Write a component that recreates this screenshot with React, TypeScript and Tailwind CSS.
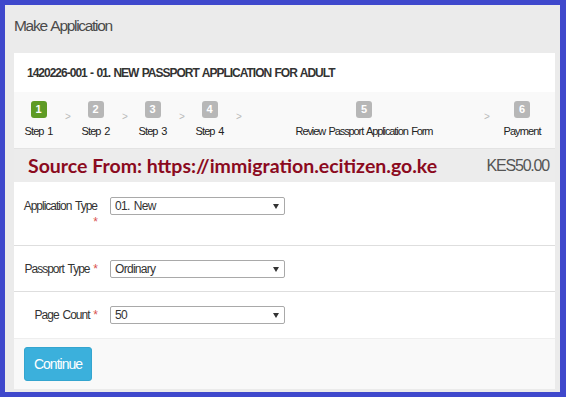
import React from "react";

const Chevron = ({ ml }: { ml: string }) => (
  <div className={`${ml} w-[8px] mt-[11px] flex justify-center`}>
    <span className="text-[10px] leading-[10px] text-[#b9b9b9]">&gt;</span>
  </div>
);

const Step = ({
  n,
  label,
  w,
  ml,
  track,
  active,
}: {
  n: number;
  label: string;
  w: string;
  ml: string;
  track: string;
  active?: boolean;
}) => (
  <div className={`${w} ${ml} flex flex-col items-center`}>
    <div
      className={`w-[16px] h-[17px] rounded-[3px] flex items-center justify-center text-white text-[11px] font-bold ${
        active ? "bg-[#5e9b25]" : "bg-[#b7b7b7]"
      }`}
    >
      {n}
    </div>
    <div
      className={`mt-[6px] text-[11px] ${track} [word-spacing:1.5px] leading-[14px] text-[#222] whitespace-nowrap`}
    >
      {label}
    </div>
  </div>
);

const Select = ({ value }: { value: string }) => (
  <div className="w-[175px] h-[18px] border border-[#a9a9a9] rounded-[2px] bg-white flex items-center justify-between pl-[4px] pr-[5px]">
    <span className="text-[12px] tracking-[-0.7px] [word-spacing:1.5px] leading-[14px] text-[#333]">{value}</span>
    <svg width="6" height="5" viewBox="0 0 6 5">
      <polygon points="0,0 6,0 3,5" fill="#333" />
    </svg>
  </div>
);

export default function App() {
  return (
    <div className="w-[566px] h-[397px] bg-[#3f48cc] pt-[5px] pl-[5px] pr-[6px] pb-[5px] font-['Liberation_Sans',Arial,sans-serif]">
      <div className="h-full bg-[#ebebeb] pl-[9px] pr-[5px] pb-[3px] flex flex-col">
        <div className="h-[48px] pb-[6px] flex items-center text-[15.5px] tracking-[-1.3px] [word-spacing:1.5px] text-[#4a4a4a]">
          Make Application
        </div>
        <div className="flex-1 bg-white flex flex-col">
          <div className="h-[39px] pl-[13px] flex items-center text-[12px] tracking-[-1px] [word-spacing:1px] font-bold text-[#333]">
            1420226-001 - 01. NEW PASSPORT APPLICATION FOR ADULT
          </div>
          <div className="h-[57px] bg-[#f9f9f9] border-b border-[#e3e3e3] pt-[9px] pl-[11px] flex items-start">
            <Step n={1} label="Step 1" w="w-[27px]" ml="ml-0" track="tracking-[-0.9px]" active />
            <Chevron ml="ml-[12px]" />
            <Step n={2} label="Step 2" w="w-[27px]" ml="ml-[10px]" track="tracking-[-0.9px]" />
            <Chevron ml="ml-[12px]" />
            <Step n={3} label="Step 3" w="w-[27px]" ml="ml-[10px]" track="tracking-[-0.9px]" />
            <Chevron ml="ml-[12px]" />
            <Step n={4} label="Step 4" w="w-[27px]" ml="ml-[10px]" track="tracking-[-0.9px]" />
            <Chevron ml="ml-[12px]" />
            <Step
              n={5}
              label="Review Passport Application Form"
              w="w-[136px]"
              ml="ml-[53px]"
              track="tracking-[-1.1px]"
            />
            <Chevron ml="ml-[51px]" />
            <Step n={6} label="Payment" w="w-[34px]" ml="ml-[14px]" track="tracking-[-0.9px]" />
          </div>
          <div className="h-[33px] bg-[#ececec] pl-[14px] pr-[6px] flex items-center justify-between">
            <span className="font-['Lato',sans-serif] font-bold text-[19.5px] text-[#8b0a1e] leading-none">
              Source From: https://immigration.ecitizen.go.ke
            </span>
            <span className="text-[16px] tracking-[-1.2px] text-[#555]">KES50.00</span>
          </div>
          <div className="h-[64px] border-b border-[#dedede] flex items-start pt-[15px]">
            <div className="w-[83px] text-right text-[12px] tracking-[-1px] [word-spacing:1.5px] leading-[16px] text-[#333] mt-[1px] whitespace-nowrap">
              Application Type
              <br />
              <span className="text-[#d9534f]">*</span>
            </div>
            <div className="ml-[13px]">
              <Select value="01. New" />
            </div>
          </div>
          <div className="h-[46px] border-b border-[#dedede] flex items-start pt-[14px]">
            <div className="w-[83px] text-right text-[12px] tracking-[-1px] [word-spacing:1.5px] leading-[16px] text-[#333] mt-[1px] whitespace-nowrap">
              Passport Type <span className="text-[#d9534f]">*</span>
            </div>
            <div className="ml-[13px]">
              <Select value="Ordinary" />
            </div>
          </div>
          <div className="h-[46px] flex items-start pt-[14px]">
            <div className="w-[83px] text-right text-[12px] tracking-[-1px] [word-spacing:1.5px] leading-[16px] text-[#333] mt-[1px] whitespace-nowrap">
              Page Count <span className="text-[#d9534f]">*</span>
            </div>
            <div className="ml-[13px]">
              <Select value="50" />
            </div>
          </div>
          <div className="flex-1 bg-[#f9f9f9] border-t border-[#eeeeee] pl-[10px] pt-[8px]">
            <button className="w-[68px] h-[34px] rounded-[3px] bg-[#3bb0dc] border border-[#34a5cf] text-white text-[14px] tracking-[-1px]">
              Continue
            </button>
          </div>
        </div>
      </div>
    </div>
  );
}
